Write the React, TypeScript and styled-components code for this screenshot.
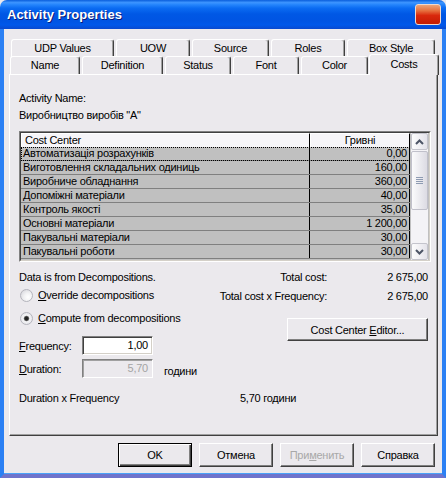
import React from "react";
import styled, { createGlobalStyle } from "styled-components";

const FACE = "#ebe9ed";

const GlobalStyle = createGlobalStyle`
  html, body { margin: 0; padding: 0; background: #ffffff; }
  #root { width: 446px; height: 478px; }
`;

const Window = styled.div`
  width: 446px;
  height: 478px;
  display: flex;
  flex-direction: column;
  overflow: hidden;
  background: ${FACE};
  font-family: "Liberation Sans", Arial, sans-serif;
  font-size: 11px;
  letter-spacing: -0.25px;
  color: #000;
`;

const TitleBar = styled.div`
  flex: none;
  height: 29px;
  display: flex;
  align-items: center;
  justify-content: space-between;
  padding: 0 5px 0 7px;
  border-radius: 7px 7px 0 0;
  background: linear-gradient(
    to bottom,
    #0a5edc 0%,
    #3d95ff 9%,
    #2585fc 16%,
    #0b6cf2 28%,
    #0058e5 48%,
    #0054e3 72%,
    #0058ea 86%,
    #0a49cf 100%
  );
`;

const Title = styled.span`
  color: #fff;
  font-weight: bold;
  font-size: 13px;
  letter-spacing: 0;
  text-shadow: 1px 1px #0a1a78;
`;

const CloseButton = styled.div`
  width: 26px;
  height: 21px;
  box-sizing: border-box;
  border: 1px solid #f0d8cc;
  border-radius: 3px;
  background: linear-gradient(#eba47a 0%, #e6703e 30%, #d9280c 55%, #c41c04 100%);
`;

const Frame = styled.div`
  flex: 1;
  display: flex;
  flex-direction: column;
  padding: 10px 4px 0 5px;
  border-left: 4px solid #2b80f4;
  border-right: 4px solid #2b80f4;
  border-bottom: 4px solid #6f74cc;
  box-shadow: inset 0 -1px #4aa2f8;
`;

const TabRow = styled.div<{ $indent: number; $h: number }>`
  display: flex;
  gap: 2px;
  height: ${(p) => p.$h}px;
  padding-left: ${(p) => p.$indent}px;
`;

const Tab = styled.div<{ $w: number; $active?: boolean }>`
  position: relative;
  z-index: ${(p) => (p.$active ? 2 : 0)};
  flex: none;
  width: ${(p) => p.$w}px;
  height: ${(p) => (p.$active ? 21 : 18)}px;
  margin-top: ${(p) => (p.$active ? -2 : 0)}px;
  margin-left: ${(p) => (p.$active ? -1 : 0)}px;
  padding-bottom: ${(p) => (p.$active ? 3 : 1)}px;
  box-sizing: border-box;
  display: flex;
  align-items: center;
  justify-content: center;
  background: ${FACE};
  border-top: 1px solid #fff;
  border-left: 1px solid #fff;
  border-right: 1px solid #404040;
  border-radius: 3px 3px 0 0;
  box-shadow: inset -1px 0 #a0a0a0;
`;

const Panel = styled.div`
  height: 362px;
  box-sizing: border-box;
  border-top: 1px solid #fff;
  border-left: 1px solid #fff;
  border-right: 1px solid #404040;
  border-bottom: 1px solid #404040;
  box-shadow: inset -1px -1px #a0a0a0;
  padding: 16px 6px 0 9px;
  display: flex;
  flex-direction: column;
`;

const Line = styled.div<{ $mt?: number }>`
  height: 14px;
  line-height: 14px;
  margin-top: ${(p) => p.$mt ?? 0}px;
  white-space: nowrap;
`;

const Grid = styled.div`
  margin-top: 9px;
  height: 131px;
  box-sizing: border-box;
  border: 1px solid;
  border-color: #808080 #fff #fff #808080;
`;

const GridInner = styled.div`
  height: 100%;
  box-sizing: border-box;
  border: 1px solid;
  border-color: #404040 #d4d0c8 #d4d0c8 #404040;
  display: flex;
  background: #c0c0c0;
`;

const Table = styled.div`
  width: 389px;
  display: flex;
  flex-direction: column;
`;

const HeaderRow = styled.div`
  display: flex;
  height: 14px;
`;

const HeaderCell = styled.div<{ $w?: number; $center?: boolean }>`
  ${(p) => (p.$w ? `width: ${p.$w}px; flex: none;` : "flex: 1;")}
  box-sizing: border-box;
  line-height: 13px;
  padding-left: ${(p) => (p.$center ? 0 : 3)}px;
  text-align: ${(p) => (p.$center ? "center" : "left")};
  background: #f6f5f8;
  border-top: 1px solid #fff;
  border-left: 1px solid #fff;
  border-right: 1px solid #000;
`;

const Row = styled.div<{ $focused?: boolean }>`
  display: flex;
  height: 14px;
  box-sizing: border-box;
  border-bottom: 1px solid #808080;
  ${(p) => (p.$focused ? "outline: 1px dotted #000; outline-offset: -1px;" : "")}
`;

const NameCell = styled.div`
  width: 289px;
  flex: none;
  box-sizing: border-box;
  padding-left: 2px;
  line-height: 13px;
  border-right: 1px solid #000;
  white-space: nowrap;
`;

const ValueCell = styled.div`
  flex: 1;
  box-sizing: border-box;
  padding-right: 2px;
  line-height: 13px;
  text-align: right;
  border-right: 1px solid #000;
`;

const ScrollBar = styled.div`
  width: 17px;
  margin-left: 1px;
  display: flex;
  flex-direction: column;
  background: #f4f3f6;
`;

const ScrollButton = styled.div`
  height: 17px;
  box-sizing: border-box;
  border: 1px solid #c4c4cc;
  border-radius: 2px;
  background: linear-gradient(to right, #fdfdfd, #e4e3ea);
  display: flex;
  align-items: center;
  justify-content: center;
`;

const Thumb = styled.div`
  height: 59px;
  margin-top: 1px;
  box-sizing: border-box;
  border: 1px solid #c0c0ca;
  border-radius: 2px;
  background: linear-gradient(to right, #fbfbfc, #dcdbe3);
  display: flex;
  flex-direction: column;
  align-items: center;
  justify-content: center;
  gap: 1px;
`;

const Grip = styled.div`
  width: 7px;
  height: 1px;
  background: #8e9bb2;
`;

const Track = styled.div`
  flex: 1;
`;

const Bottom = styled.div`
  margin-top: 8px;
  display: flex;
`;

const LeftCol = styled.div`
  width: 196px;
  flex: none;
  display: flex;
  flex-direction: column;
`;

const RightCol = styled.div`
  flex: 1;
  display: flex;
  flex-direction: column;
  align-items: flex-end;
`;

const RadioRow = styled.div<{ $mt: number }>`
  margin-top: ${(p) => p.$mt}px;
  height: 14px;
  display: flex;
  align-items: center;
  gap: 5px;
  padding-left: 1px;
  white-space: nowrap;
`;

const Radio = styled.span<{ $checked?: boolean }>`
  width: 13px;
  height: 13px;
  box-sizing: border-box;
  border-radius: 50%;
  border: 1px solid #b4b4bc;
  background: ${(p) =>
    p.$checked
      ? "radial-gradient(circle, #1e1e1e 0, #2a2a2a 1.8px, #9a9a9a 2.6px, #f4f4f6 3.2px, #dcdce2 100%)"
      : "radial-gradient(circle at 65% 65%, #ffffff 0, #f2f2f4 40%, #d0d0d6 100%)"};
`;

const FieldRow = styled.div<{ $mt: number }>`
  margin-top: ${(p) => p.$mt}px;
  display: flex;
  align-items: center;
  white-space: nowrap;
`;

const FieldLabel = styled.span<{ $disabled?: boolean }>`
  width: 63px;
  flex: none;
`;

const Input = styled.div<{ $disabled?: boolean }>`
  width: 71px;
  height: 19px;
  box-sizing: border-box;
  border: 1px solid;
  border-color: #808080 #fff #fff #808080;
  box-shadow: ${(p) =>
    p.$disabled ? "inset 1px 1px #a0a0a0" : "inset 1px 1px #404040, inset -1px -1px #d4d0c8"};
  background: ${(p) => (p.$disabled ? FACE : "#fff")};
  color: ${(p) => (p.$disabled ? "#a4a4a4" : "#000")};
  text-align: right;
  padding-right: 4px;
  line-height: 17px;
`;

const Unit = styled.span`
  margin-left: 11px;
  align-self: flex-end;
  line-height: 14px;
`;

const TotalRow = styled.div<{ $mt?: number }>`
  margin-top: ${(p) => p.$mt ?? 0}px;
  height: 14px;
  line-height: 14px;
  display: flex;
  white-space: nowrap;
`;

const TotalValue = styled.span`
  width: 104px;
  padding-right: 3px;
  box-sizing: border-box;
  text-align: right;
`;

const Button = styled.div<{ $w: number; $h?: number; $mt?: number; $default?: boolean; $disabled?: boolean }>`
  width: ${(p) => p.$w}px;
  height: ${(p) => p.$h ?? 24}px;
  margin-top: ${(p) => p.$mt ?? 0}px;
  box-sizing: border-box;
  display: flex;
  align-items: center;
  justify-content: center;
  background: ${FACE};
  color: ${(p) => (p.$disabled ? "#a8a8a8" : "#000")};
  white-space: nowrap;
  ${(p) =>
    p.$default
      ? "border: 1px solid #000; box-shadow: inset 1px 1px #fff, inset -1px -1px #404040, inset -2px -2px #808080;"
      : "border: 1px solid; border-color: #fff #404040 #404040 #fff; box-shadow: inset -1px -1px #808080;"}
`;

const ResultRow = styled.div`
  margin-top: 13px;
  height: 14px;
  line-height: 14px;
  display: flex;
  white-space: nowrap;
`;

const ResultLabel = styled.span`
  width: 221px;
  flex: none;
`;

const ButtonRow = styled.div`
  margin-top: 7px;
  padding-right: 3px;
  display: flex;
  justify-content: flex-end;
  gap: 7px;
`;

const Chevron = ({ up }: { up?: boolean }) => (
  <svg width="9" height="6" viewBox="0 0 9 6">
    <path
      d={up ? "M1 5 L4.5 1.5 L8 5" : "M1 1 L4.5 4.5 L8 1"}
      fill="none"
      stroke="#4d5566"
      strokeWidth="2"
    />
  </svg>
);

const topTabs = [
  { label: "UDP Values", w: 103 },
  { label: "UOW", w: 74 },
  { label: "Source", w: 77 },
  { label: "Roles", w: 74 },
  { label: "Box Style", w: 88 },
];

const bottomTabs = [
  { label: "Name", w: 70 },
  { label: "Definition", w: 81 },
  { label: "Status", w: 66 },
  { label: "Font", w: 66 },
  { label: "Color", w: 67 },
];

const costs = [
  ["Автоматизація розрахунків", "0,00"],
  ["Виготовлення складальних одиниць", "160,00"],
  ["Виробниче обладнання", "360,00"],
  ["Допоміжні матеріали", "40,00"],
  ["Контроль якості", "35,00"],
  ["Основні матеріали", "1 200,00"],
  ["Пакувальні матеріали", "30,00"],
  ["Пакувальні роботи", "30,00"],
];

export default function App() {
  return (
    <>
      <GlobalStyle />
      <Window>
        <TitleBar>
          <Title>Activity Properties</Title>
          <CloseButton />
        </TitleBar>
        <Frame>
          <TabRow $indent={2} $h={17}>
            {topTabs.map((t) => (
              <Tab key={t.label} $w={t.w}>
                {t.label}
              </Tab>
            ))}
          </TabRow>
          <TabRow $indent={1} $h={18}>
            {bottomTabs.map((t) => (
              <Tab key={t.label} $w={t.w}>
                {t.label}
              </Tab>
            ))}
            <Tab $w={70} $active>
              Costs
            </Tab>
          </TabRow>
          <Panel>
            <Line>Activity Name:</Line>
            <Line $mt={3}>Виробництво виробів "А"</Line>
            <Grid>
              <GridInner>
                <Table>
                  <HeaderRow>
                    <HeaderCell $w={289}>Cost Center</HeaderCell>
                    <HeaderCell $center>Гривні</HeaderCell>
                  </HeaderRow>
                  {costs.map(([name, value], i) => (
                    <Row key={name} $focused={i === 0}>
                      <NameCell>{name}</NameCell>
                      <ValueCell>{value}</ValueCell>
                    </Row>
                  ))}
                </Table>
                <ScrollBar>
                  <ScrollButton>
                    <Chevron up />
                  </ScrollButton>
                  <Thumb>
                    <Grip />
                    <Grip />
                    <Grip />
                    <Grip />
                  </Thumb>
                  <Track />
                  <ScrollButton>
                    <Chevron />
                  </ScrollButton>
                </ScrollBar>
              </GridInner>
            </Grid>
            <Bottom>
              <LeftCol>
                <Line>Data is from Decompositions.</Line>
                <RadioRow $mt={4}>
                  <Radio />
                  <span>
                    <u>O</u>verride decompositions
                  </span>
                </RadioRow>
                <RadioRow $mt={9}>
                  <Radio $checked />
                  <span>
                    <u>C</u>ompute from decompositions
                  </span>
                </RadioRow>
                <FieldRow $mt={11}>
                  <FieldLabel>
                    <u>F</u>requency:
                  </FieldLabel>
                  <Input>1,00</Input>
                </FieldRow>
                <FieldRow $mt={4}>
                  <FieldLabel>
                    <u>D</u>uration:
                  </FieldLabel>
                  <Input $disabled>5,70</Input>
                  <Unit>години</Unit>
                </FieldRow>
              </LeftCol>
              <RightCol>
                <TotalRow>
                  <span>Total cost:</span>
                  <TotalValue>2 675,00</TotalValue>
                </TotalRow>
                <TotalRow $mt={5}>
                  <span>Total cost x Frequency:</span>
                  <TotalValue>2 675,00</TotalValue>
                </TotalRow>
                <Button $w={141} $h={23} $mt={15} style={{ marginRight: 3 }}>
                  Cost Center&nbsp;<u>E</u>ditor...
                </Button>
              </RightCol>
            </Bottom>
            <ResultRow>
              <ResultLabel>Duration x Frequency</ResultLabel>
              <span>5,70 години</span>
            </ResultRow>
          </Panel>
          <ButtonRow>
            <Button $w={74} $default>
              OK
            </Button>
            <Button $w={74}>Отмена</Button>
            <Button $w={74} $disabled>
              При<u>м</u>енить
            </Button>
            <Button $w={74}>Справка</Button>
          </ButtonRow>
        </Frame>
      </Window>
    </>
  );
}
